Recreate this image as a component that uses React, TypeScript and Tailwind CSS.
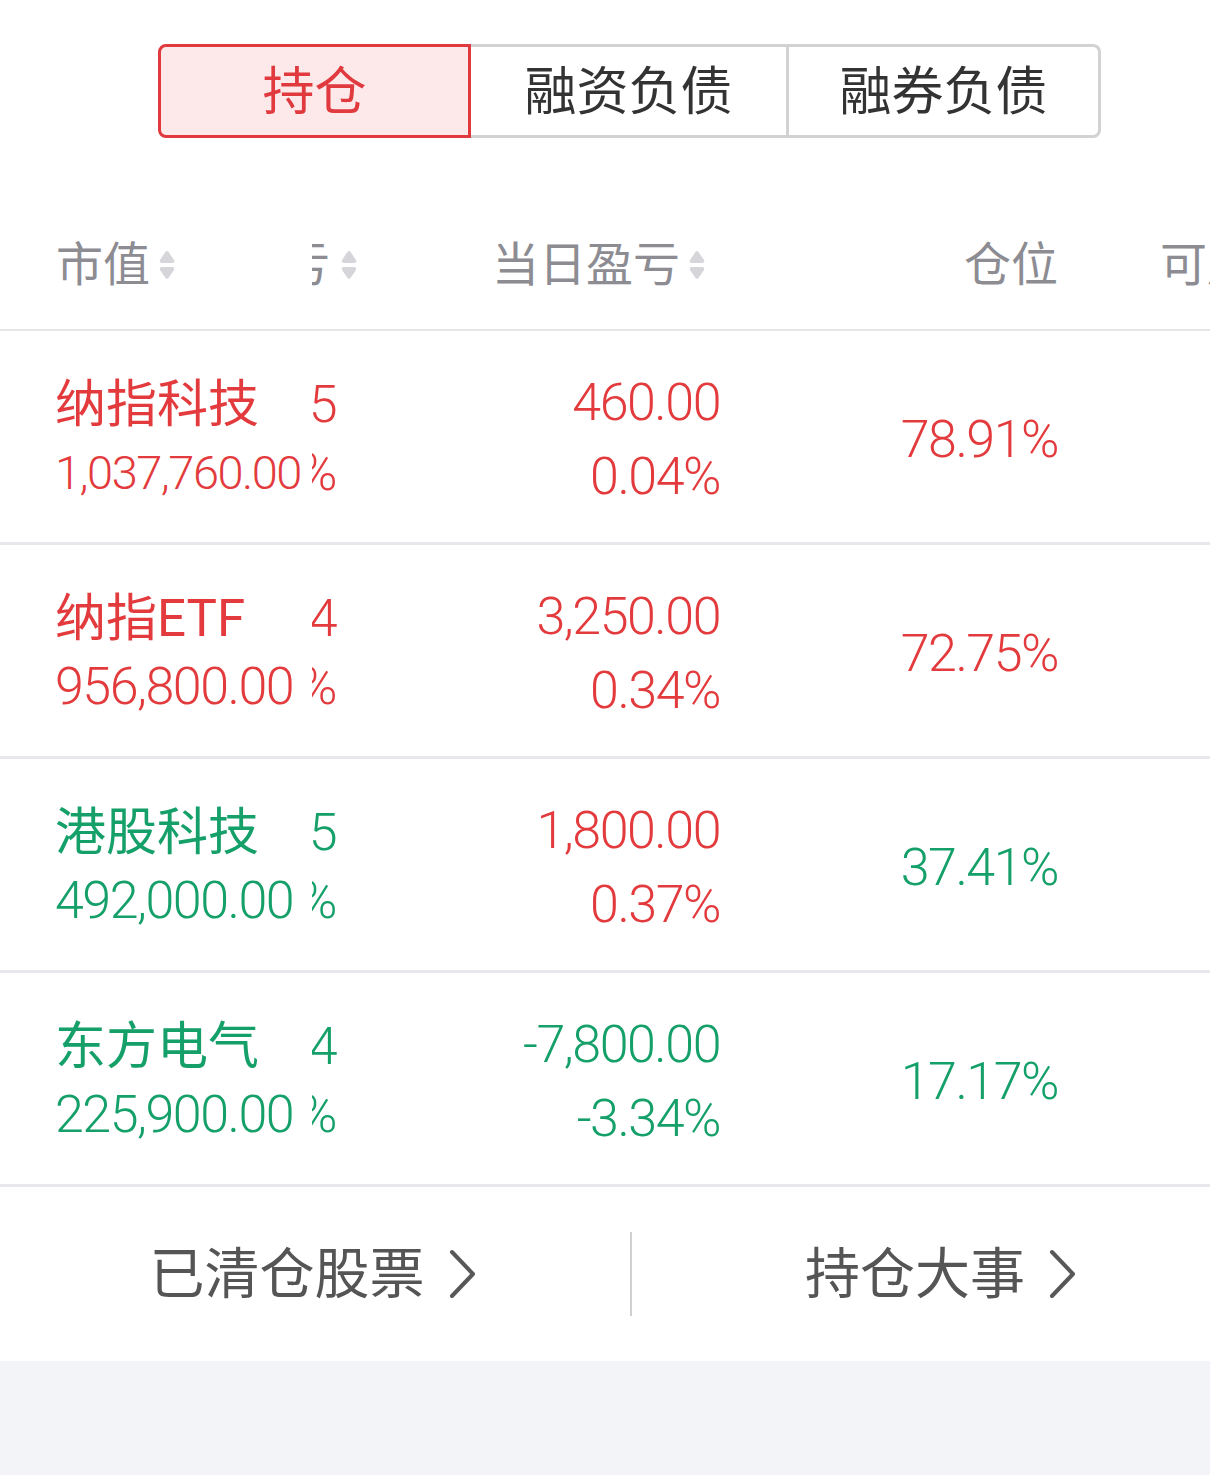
import React from "react";

type Tone = "up" | "down";

type Holding = {
  name: string;
  value: string;
  valueSize: string;
  pnl: string;
  pnlPct: string;
  dayPnl: string;
  dayPct: string;
  dayTone: Tone;
  weight: string;
  avail: string;
  tone: Tone;
};

const HOLDINGS: Holding[] = [
  { name: "纳指科技", value: "1,037,760.00", valueSize: "text-[47px]", pnl: "37,760.05", pnlPct: "3.78%", dayPnl: "460.00", dayPct: "0.04%", dayTone: "up", weight: "78.91%", avail: "680,000", tone: "up" },
  { name: "纳指ETF", value: "956,800.00", valueSize: "text-[52px]", pnl: "56,800.04", pnlPct: "6.31%", dayPnl: "3,250.00", dayPct: "0.34%", dayTone: "up", weight: "72.75%", avail: "320,000", tone: "up" },
  { name: "港股科技", value: "492,000.00", valueSize: "text-[52px]", pnl: "-18,000.05", pnlPct: "-3.53%", dayPnl: "1,800.00", dayPct: "0.37%", dayTone: "up", weight: "37.41%", avail: "600,000", tone: "down" },
  { name: "东方电气", value: "225,900.00", valueSize: "text-[52px]", pnl: "-14,100.04", pnlPct: "-5.88%", dayPnl: "-7,800.00", dayPct: "-3.34%", dayTone: "down", weight: "17.17%", avail: "15,000", tone: "down" },
];

const TONE: Record<Tone, string> = {
  up: "text-[#e33b3d]",
  down: "text-[#15a06a]",
};

const NUM = "font-['Roboto','Noto_Sans_CJK_SC',sans-serif] font-light tracking-[-1.5px]";
const CJK = "font-['Roboto','Noto_Sans_CJK_SC',sans-serif]";

function SortIcon() {
  return (
    <svg width="18" height="32" viewBox="0 0 18 32" className="shrink-0">
      <path d="M7.3 3.2 Q9 1 10.7 3.2 L16 11 Q17 14 14 14 L4 14 Q1 14 2 11 Z" fill="#d6d6da" />
      <path d="M7.3 28.8 Q9 31 10.7 28.8 L16 21 Q17 18 14 18 L4 18 Q1 18 2 21 Z" fill="#d6d6da" />
    </svg>
  );
}

function Chevron() {
  return (
    <svg width="30" height="50" viewBox="0 0 30 50" className="shrink-0">
      <polyline points="5,3 26,25 5,47" fill="none" stroke="#585858" strokeWidth="4" strokeLinecap="round" strokeLinejoin="round" />
    </svg>
  );
}

export default function App() {
  return (
    <div className={`w-full min-h-screen bg-[#f3f4f8] ${CJK}`}>
      <div className="bg-white">

        {/* ── Tabs ── */}
        <div className="pt-[44px] pl-[158px]">
          <div className="flex h-[94px] w-[943px] text-[52px] leading-none">
            <div className="w-[313px] flex items-center justify-center pt-[4px] rounded-l-[8px] border-[3px] border-[#e0393e] bg-[#fde8ea] text-[#e0393e]">
              持仓
            </div>
            <div className="w-[318px] flex items-center justify-center pt-[4px] border-y-[3px] border-r-[3px] border-[#d2d2d2] text-[#333333]">
              融资负债
            </div>
            <div className="w-[312px] flex items-center justify-center pt-[4px] rounded-r-[8px] border-y-[3px] border-r-[3px] border-[#d2d2d2] text-[#333333]">
              融券负债
            </div>
          </div>
        </div>

        {/* ── Table ── */}
        <div className="mt-[63px] overflow-hidden">
          {/* header */}
          <div className="flex h-[130px] items-center border-b-2 border-[#e6e6e8] text-[47px] text-[#8c8c92] whitespace-nowrap">
            <div className="relative z-10 w-[312px] h-full shrink-0 bg-white pl-[56px] flex items-center gap-[8px]">
              <span>市值</span>
              <SortIcon />
            </div>
            <div className="w-[260px] shrink-0 ml-[-214px] flex items-center justify-end gap-[10px]">
              <span>持仓盈亏</span>
              <SortIcon />
            </div>
            <div className="w-[348px] shrink-0 flex items-center justify-end gap-[8px]">
              <span>当日盈亏</span>
              <SortIcon />
            </div>
            <div className="w-[352px] shrink-0 flex justify-end">
              <span>仓位</span>
            </div>
            <div className="w-[300px] shrink-0 pl-[102px]">
              <span>可用</span>
            </div>
          </div>

          {/* rows */}
          {HOLDINGS.map(h => (
            <div key={h.name} className="flex h-[214px] border-b-[3px] border-[#e7e7ec] whitespace-nowrap">
              <div className={`relative z-10 w-[312px] shrink-0 bg-white pl-[55px] pt-[40px] ${TONE[h.tone]}`}>
                <div className="text-[51px] leading-[68px]">{h.name}</div>
                <div className={`${NUM} ${h.valueSize} leading-[68px]`}>{h.value}</div>
              </div>
              <div className={`w-[260px] shrink-0 ml-[-236px] pt-[40px] text-right ${NUM} text-[52px] ${TONE[h.tone]}`}>
                <div className="leading-[68px]">{h.pnl}</div>
                <div className="leading-[68px]">{h.pnlPct}</div>
              </div>
              <div className={`w-[384px] shrink-0 pt-[35px] text-right ${NUM} text-[52px] ${TONE[h.dayTone]}`}>
                <div className="leading-[74px]">{h.dayPnl}</div>
                <div className="leading-[74px]">{h.dayPct}</div>
              </div>
              <div className={`w-[338px] shrink-0 pt-[7px] flex items-center justify-end ${NUM} text-[52px] ${TONE[h.tone]}`}>
                {h.weight}
              </div>
              <div className={`w-[420px] shrink-0 pt-[7px] flex items-center justify-end ${NUM} text-[52px] text-[#333333]`}>
                {h.avail}
              </div>
            </div>
          ))}
        </div>

        {/* ── Footer links ── */}
        <div className="flex h-[174px] items-center text-[55px] text-[#555555]">
          <div className="w-[630px] flex items-center justify-center gap-[22px] pr-[4px]">
            <span>已清仓股票</span>
            <Chevron />
          </div>
          <div className="w-[2px] h-[84px] bg-[#d0d0d0]" />
          <div className="flex-1 flex items-center justify-center gap-[22px] pl-[40px]">
            <span>持仓大事</span>
            <Chevron />
          </div>
        </div>
      </div>
    </div>
  );
}
